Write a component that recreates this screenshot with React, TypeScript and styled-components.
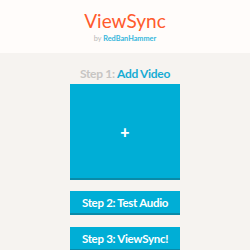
import React from "react";
import styled, { createGlobalStyle } from "styled-components";

const GlobalStyle = createGlobalStyle`
  html, body {
    margin: 0;
    padding: 0;
    background: #f6f3f0;
    font-family: Lato, "Open Sans", sans-serif;
  }
`;

const Header = styled.header`
  background: #fffcfa;
  height: 53px;
  display: flex;
  flex-direction: column;
  align-items: center;
  padding-top: 10px;
  box-sizing: border-box;
`;

const Title = styled.h1`
  margin: 0;
  font-size: 19px;
  font-weight: 400;
  color: #ff5a2c;
  line-height: 22px;
`;

const Byline = styled.div`
  font-size: 7.3px;
  color: #b8b8b8;
  margin-top: 2px;

  span {
    color: #35b7dc;
    font-weight: 700;
  }
`;

const Main = styled.main`
  display: flex;
  flex-direction: column;
  align-items: center;
  padding-top: 13px;
`;

const StepLabel = styled.div`
  font-size: 12px;
  font-weight: 700;
  letter-spacing: -0.3px;
  color: #c7c5c3;
  line-height: 16px;
  margin-bottom: 2px;

  span {
    color: #17acd4;
  }
`;

const DropBox = styled.div`
  width: 110px;
  height: 94px;
  background: #00aed6;
  border-bottom: 2px solid #0a8aa8;
  display: flex;
  align-items: center;
  justify-content: center;
  color: #fff;
  font-size: 16px;
  font-weight: 900;
`;

const StepButton = styled.button<{ $first?: boolean }>`
  width: 110px;
  height: 24px;
  margin-top: ${(p) => (p.$first ? "11px" : "12px")};
  border: none;
  border-bottom: 2px solid #0a8aa8;
  background: #00aed6;
  color: #fff;
  font-family: Lato, sans-serif;
  font-size: 11.5px;
  font-weight: 700;
  letter-spacing: -0.3px;
  padding: 0;
`;

export default function App() {
  return (
    <>
      <GlobalStyle />
      <Header>
        <Title>ViewSync</Title>
        <Byline>
          by <span>RedBanHammer</span>
        </Byline>
      </Header>
      <Main>
        <StepLabel>
          Step 1: <span>Add Video</span>
        </StepLabel>
        <DropBox>+</DropBox>
        <StepButton $first>Step 2: Test Audio</StepButton>
        <StepButton>Step 3: ViewSync!</StepButton>
      </Main>
    </>
  );
}
